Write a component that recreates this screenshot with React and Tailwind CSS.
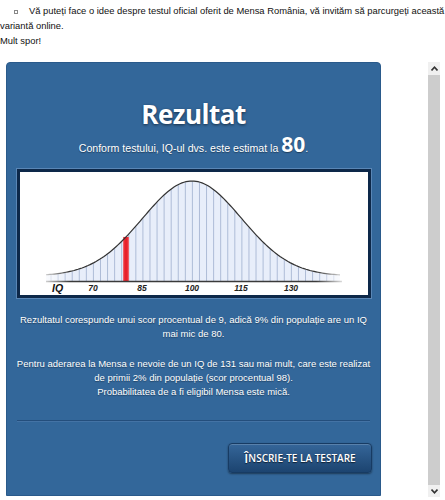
import React from 'react';

function BellCurve() {
  const mean = 172, sd = 49.5, base = 104, amp = 95, axis = 109;
  const y = x => base - amp * Math.exp(-0.5 * ((x - mean) / sd) ** 2);
  const pts = [];
  for (let x = 26; x <= 320; x += 2) pts.push(`${x},${y(x).toFixed(2)}`);
  const curve = 'M' + pts.join(' L');
  const area = `M26,${axis} L${pts.join(' L')} L320,${axis} Z`;
  const lines = [];
  for (let x = 31; x < 320; x += 7.07) lines.push(x);
  const labels = [[73, '70'], [122, '85'], [172, '100'], [221, '115'], [271, '130']];

  return (
    <svg width="348" height="123" viewBox="0 0 348 123" className="block">
      <defs>
        <linearGradient id="fadeL" x1="0" x2="1" y1="0" y2="0">
          <stop offset="0" stopColor="#fff" stopOpacity="1" />
          <stop offset="1" stopColor="#fff" stopOpacity="0" />
        </linearGradient>
        <linearGradient id="fadeR" x1="0" x2="1" y1="0" y2="0">
          <stop offset="0" stopColor="#fff" stopOpacity="0" />
          <stop offset="1" stopColor="#fff" stopOpacity="1" />
        </linearGradient>
        <linearGradient id="red" x1="0" x2="1" y1="0" y2="0">
          <stop offset="0" stopColor="#f4747a" />
          <stop offset="0.3" stopColor="#e8202a" />
          <stop offset="0.7" stopColor="#e8202a" />
          <stop offset="1" stopColor="#f4747a" />
        </linearGradient>
      </defs>
      <path d={area} fill="#e8eefa" />
      {lines.map((x, i) => (
        <line key={i} x1={x} x2={x} y1={y(x) + 0.6} y2={axis} stroke="#aebcd7" strokeWidth="1" />
      ))}
      <rect x="103" y={y(106)} width="6" height={axis - y(106)} fill="url(#red)" />
      <path d={curve} fill="none" stroke="#333" strokeWidth="1.2" />
      <line x1="26" x2="322" y1={axis + 0.5} y2={axis + 0.5} stroke="#3a3a3a" strokeWidth="1.5" />
      <rect x="18" y="0" width="32" height={axis + 2} fill="url(#fadeL)" />
      <rect x="296" y="0" width="32" height={axis + 2} fill="url(#fadeR)" />
      <text x="32" y="120" fontFamily="Liberation Sans, Arial, sans-serif" fontStyle="italic" fontWeight="bold" fontSize="10.5" fill="#111">IQ</text>
      {labels.map(([x, t]) => (
        <text key={t} x={x} y="119" textAnchor="middle" fontFamily="Liberation Sans, Arial, sans-serif" fontStyle="italic" fontWeight="bold" fontSize="8.5" fill="#222">{t}</text>
      ))}
    </svg>
  );
}

function Scrollbar() {
  return (
    <div className="w-[12px] h-[435px] flex flex-col bg-[#f0f0f0]">
      <div className="h-[13px] flex items-center justify-center">
        <svg width="7" height="5" viewBox="0 0 7 5"><path d="M0.5 4.5 L3.5 1.2 L6.5 4.5" fill="none" stroke="#333" strokeWidth="1.6" /></svg>
      </div>
      <div className="flex-1 bg-[#cdcdcd]" />
      <div className="h-[12px] flex items-center justify-center">
        <svg width="7" height="5" viewBox="0 0 7 5"><path d="M0.5 0.5 L3.5 3.8 L6.5 0.5" fill="none" stroke="#333" strokeWidth="1.6" /></svg>
      </div>
    </div>
  );
}

export default function App() {
  return (
    <div className="w-[445px] h-[500px] overflow-hidden bg-white font-['Liberation_Sans',Arial,sans-serif]">
      {/* intro text */}
      <p className="pt-[3px] text-[9.4px] leading-[15px] text-[#111] whitespace-nowrap">
        <span className="inline-block w-[29px] pl-[14px]">
          <span className="inline-block w-[4px] h-[4px] border border-[#888] align-middle" />
        </span>
        Vă puteți face o idee despre testul oficial oferit de Mensa România, vă invităm să parcurgeți această
        <br />
        variantă online.
        <br />
        Mult spor!
      </p>

      <div className="flex mt-[14px]">
        {/* result panel */}
        <div className="ml-[6px] w-[375px] h-[434px] bg-[#33679a] border border-[#2a5a8b] rounded-t-[4px] text-white">
          <div className="h-[105px] flex flex-col items-center">
            <h1 className="pt-[34px] font-['Open_Sans',sans-serif] font-bold text-[26px] tracking-[-0.5px] leading-[34px] [text-shadow:0_1px_3px_rgba(0,0,0,0.55)]">
              Rezultat
            </h1>
            <div className="mt-[3px] flex items-baseline justify-center [text-shadow:0_1px_1px_rgba(0,0,0,0.4)]">
              <span className="text-[10.6px] leading-[13px]">Conform testului, IQ-ul dvs. este estimat la&nbsp;</span>
              <span className="font-['Open_Sans',sans-serif] font-bold text-[21px] leading-[21px]">80</span>
              <span className="text-[10.6px] leading-[13px]">.</span>
            </div>
          </div>

          <div className="ml-[9px] w-[356px] border border-[#5a86b5]">
            <div className="border-[3px] border-[#0d2849] bg-white">
              <BellCurve />
            </div>
          </div>

          <div className="mt-[14px] text-center text-[9.5px] leading-[14px] whitespace-nowrap [text-shadow:0_1px_1px_rgba(0,0,0,0.35)]">
            <p>
              Rezultatul corespunde unui scor procentual de 9, adică 9% din populație are un IQ
              <br />
              mai mic de 80.
            </p>
            <p className="mt-[16px]">
              Pentru aderarea la Mensa e nevoie de un IQ de 131 sau mai mult, care este realizat
              <br />
              de primii 2% din populație (scor procentual 98).
              <br />
              Probabilitatea de a fi eligibil Mensa este mică.
            </p>
          </div>

          <div className="mt-[21px] mx-[10px] h-[2px] border-t border-[#244e7c] border-b border-b-[#4473a5]" />

          <div className="mt-[21px] flex justify-end pr-[8px]">
            <button className="w-[144px] h-[30px] rounded-[4px] border border-[#173b63] bg-linear-to-b from-[#356699] to-[#1c4470] shadow-[0_1px_2px_rgba(0,0,0,0.45),inset_0_1px_0_rgba(255,255,255,0.18)] font-['Open_Sans',sans-serif] font-semibold text-white [text-shadow:0_1px_1px_rgba(0,0,0,0.6)] flex items-center justify-center">
              <span className="text-[13px] leading-none">Î</span>
              <span className="text-[10px] leading-none">NSCRIE-TE LA TESTARE</span>
            </button>
          </div>
        </div>

        <div className="ml-[47px]">
          <Scrollbar />
        </div>
      </div>
    </div>
  );
}
